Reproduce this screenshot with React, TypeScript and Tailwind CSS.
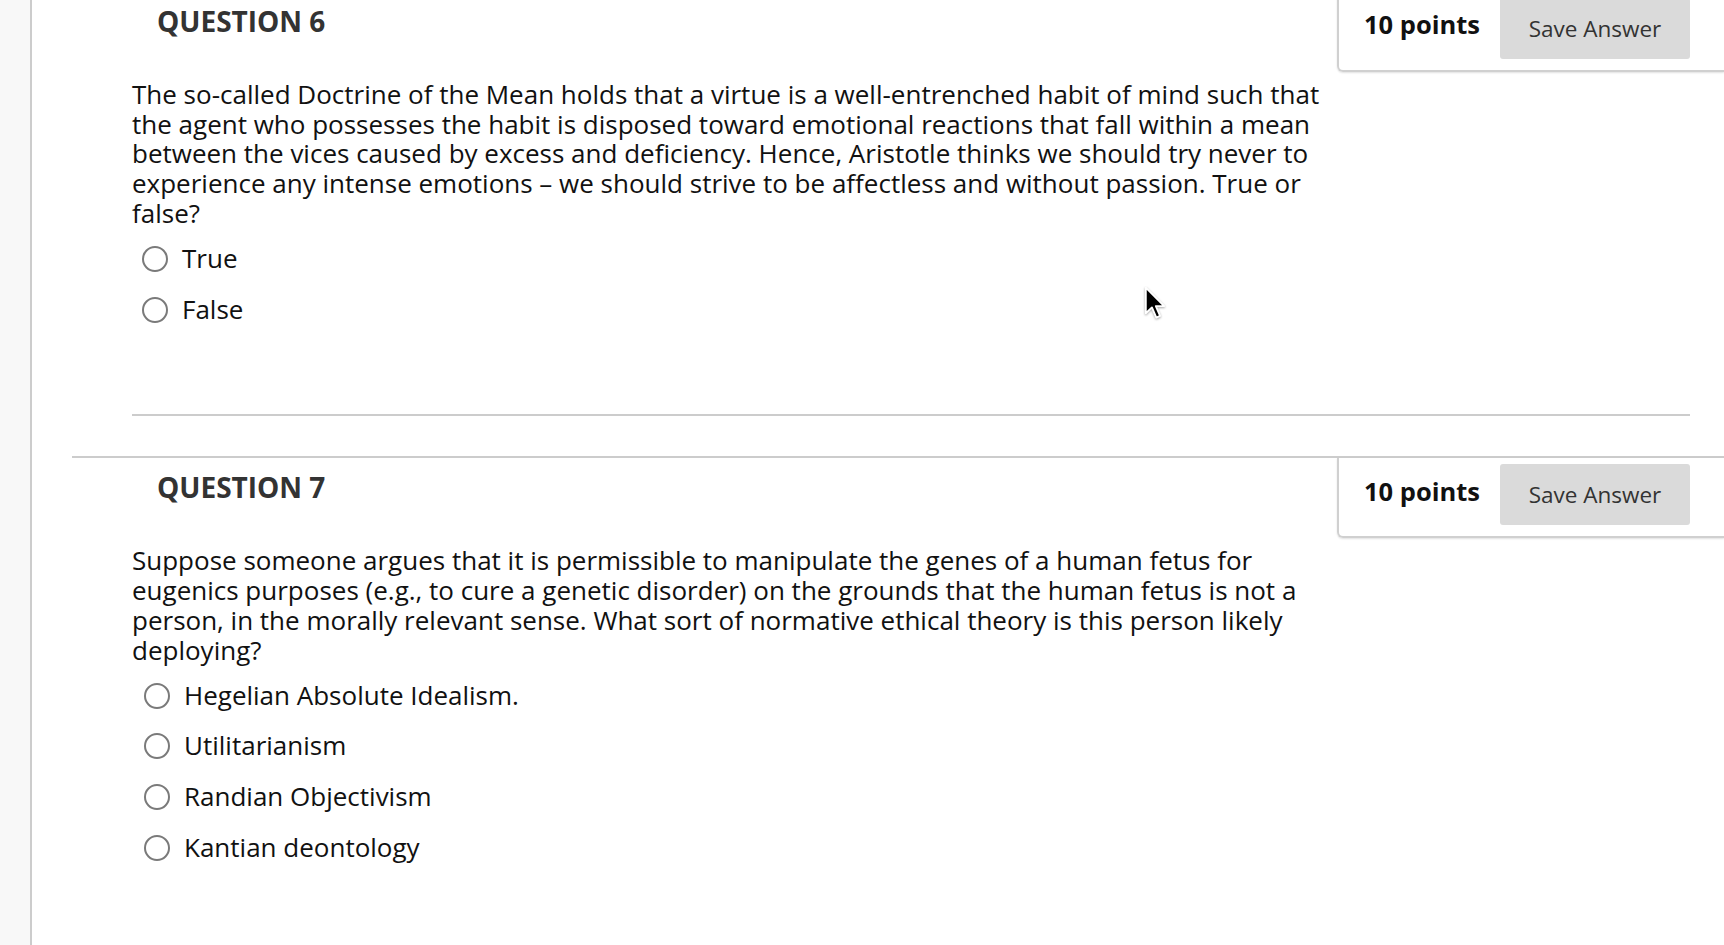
import React from 'react';

interface QuestionProps {
  number: number;
  points: number;
  text: string;
  options: string[];
  optionsIndent: string;
  separator?: boolean;
}

function Radio() {
  return <span className="w-[26px] h-[26px] shrink-0 rounded-full border-2 border-[#7a7a7a] bg-white" />;
}

function Question({ number, points, text, options, optionsIndent, separator }: QuestionProps) {
  return (
    <section className="border-t-2 border-[#cccccc]">
      {/* Header */}
      <div className="flex justify-between items-start">
        <h2 className="pl-[85px] pt-[15px] text-[28px] leading-[29px] font-bold text-[#333333]">
          QUESTION {number}
        </h2>
        <div className="flex items-center gap-[20px] border-l-2 border-b-2 border-[#d0d0d0] rounded-bl-[6px] shadow-[0_1px_2px_rgba(0,0,0,0.12)] pl-[25px] pr-[34px] pt-[6px] pb-[11px]">
          <span className="pb-[8px] text-[25.5px] font-bold text-[#111111]">{points} points</span>
          <button className="w-[190px] h-[61px] bg-[#dadada] rounded-[3px] text-[22.5px] text-[#333333]">
            Save Answer
          </button>
        </div>
      </div>

      {/* Body */}
      <div className="pl-[60px] pr-[34px] pt-[8px]">
        <p className="w-[1205px] text-[26px] leading-[29.7px] text-[#111111]">{text}</p>
        <div className={`mt-[15.5px] flex flex-col gap-[21px] ${optionsIndent}`}>
          {options.map((o) => (
            <label key={o} className="flex items-center gap-[14px] text-[26px] leading-[29.7px] text-[#111111]">
              <Radio />
              <span>{o}</span>
            </label>
          ))}
        </div>
        {separator && <div className="mt-[90px] mb-[40px] border-t-2 border-[#cccccc]" />}
      </div>
    </section>
  );
}

function Pointer() {
  return (
    <svg
      className="absolute left-[1144px] top-[286px] drop-shadow-[0_1px_1px_rgba(0,0,0,0.35)]"
      width="24"
      height="34"
      viewBox="0 0 14 20"
    >
      <path d="M1 1 L1 16 L4.6 12.6 L7.2 18.6 L9.4 17.6 L6.9 11.8 L11.8 11.8 Z" fill="#000" stroke="#fff" strokeWidth="1.1" strokeLinejoin="round" />
    </svg>
  );
}

export default function App() {
  return (
    <div
      className="relative flex h-[945px] overflow-hidden bg-white"
      style={{ fontFamily: '"Open Sans", "Noto Sans", sans-serif' }}
    >
      <div className="w-[32px] shrink-0 bg-[#f8f8f8] border-r-2 border-[#cccccc]" />
      <div className="flex-1 pl-[40px] -mt-[10px]">
        <Question
          number={6}
          points={10}
          text="The so-called Doctrine of the Mean holds that a virtue is a well-entrenched habit of mind such that the agent who possesses the habit is disposed toward emotional reactions that fall within a mean between the vices caused by excess and deficiency. Hence, Aristotle thinks we should try never to experience any intense emotions – we should strive to be affectless and without passion. True or false?"
          options={['True', 'False']}
          optionsIndent="pl-[10px]"
          separator
        />
        <Question
          number={7}
          points={10}
          text="Suppose someone argues that it is permissible to manipulate the genes of a human fetus for eugenics purposes (e.g., to cure a genetic disorder) on the grounds that the human fetus is not a person, in the morally relevant sense. What sort of normative ethical theory is this person likely deploying?"
          options={['Hegelian Absolute Idealism.', 'Utilitarianism', 'Randian Objectivism', 'Kantian deontology']}
          optionsIndent="pl-[12px]"
        />
      </div>
      <Pointer />
    </div>
  );
}
